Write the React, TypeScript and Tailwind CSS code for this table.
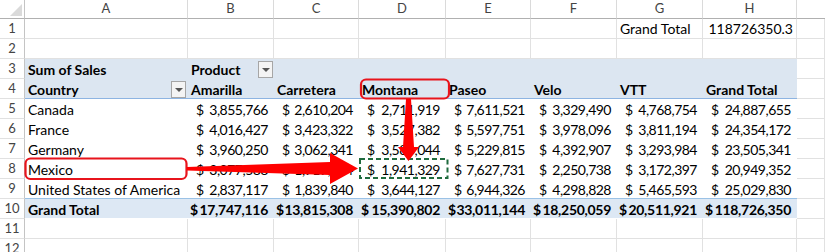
import React from "react";

// column widths: row-number gutter, A..H, then the cut-off column
const GRID =
  "grid grid-cols-[25px_163px_86px_85px_87px_85px_86px_86px_94px_1fr]";

const LETTERS = ["A", "B", "C", "D", "E", "F", "G", "H"];

const PRODUCTS = ["Amarilla", "Carretera", "Montana", "Paseo", "Velo", "VTT", "Grand Total"];

const DATA: [string, string[]][] = [
  ["Canada", ["3,855,766", "2,610,204", "2,711,919", "7,611,521", "3,329,490", "4,768,754", "24,887,655"]],
  ["France", ["4,016,427", "3,423,322", "3,527,382", "5,597,751", "3,978,096", "3,811,194", "24,354,172"]],
  ["Germany", ["3,960,250", "3,062,341", "3,586,044", "5,229,815", "4,392,907", "3,293,984", "23,505,341"]],
  ["Mexico", ["3,077,588", "1,919,444", "1,941,329", "7,627,731", "2,250,738", "3,172,397", "20,949,352"]],
  ["United States of America", ["2,837,117", "1,839,840", "3,644,127", "6,944,326", "4,298,828", "5,465,593", "25,029,830"]],
];

const TOTALS = ["17,747,116", "13,815,308", "15,390,802", "33,011,144", "18,250,059", "20,511,921", "118,726,350"];

function RowNum({ n }: { n: number }) {
  return (
    <div className="h-[20px] flex items-center justify-center border-r border-b border-r-[#c4c4c4] border-b-[#e1e1e1] text-[13px] text-[#444]">
      {n}
    </div>
  );
}

function Blank() {
  return <div className="h-[20px] border-r border-b border-[#e1e1e1]" />;
}

function Drop() {
  return (
    <span className="w-[15px] h-[17px] border border-[#a6a6a6] bg-[#f4f4f4] flex items-center justify-center">
      <span className="w-0 h-0 border-l-[4px] border-r-[4px] border-t-[4px] border-l-transparent border-r-transparent border-t-[#555]" />
    </span>
  );
}

function Money({ v, bold }: { v: string; bold?: boolean }) {
  return (
    <div
      className={`h-[20px] flex items-center justify-between pr-[6px] ${
        bold ? "pl-[2px] font-bold tracking-[-0.3px]" : "pl-[8px] tracking-[-0.5px]"
      }`}
    >
      <span>$</span>
      <span>{v}</span>
    </div>
  );
}

export default function App() {
  return (
    <div
      className="relative w-[825px] h-[252px] overflow-hidden bg-white text-[14px] text-black"
      style={{ fontFamily: "Lato, 'Liberation Sans', sans-serif" }}
    >
      {/* column headers */}
      <div className={GRID}>
        <div className="h-[19px] relative border-r border-b border-r-[#c4c4c4] border-b-[#b0b0b0]">
          <svg className="absolute left-[10px] top-[4px]" width="13" height="13" viewBox="0 0 13 13">
            <polygon points="12,0 12,12 0,12" fill="#dadada" />
          </svg>
        </div>
        {LETTERS.map((l) => (
          <div
            key={l}
            className="h-[19px] flex items-center justify-center border-r border-b border-r-[#dadada] border-b-[#b0b0b0] text-[13px] text-[#444]"
          >
            {l}
          </div>
        ))}
        <div className="h-[19px] border-b border-[#b0b0b0]" />
      </div>

      {/* row 1 */}
      <div className={GRID}>
        <RowNum n={1} />
        {[0, 1, 2, 3, 4, 5].map((i) => (
          <Blank key={i} />
        ))}
        <div className="h-[20px] flex items-center pl-[3px] border-r border-b border-[#e1e1e1]">Grand Total</div>
        <div className="h-[20px] flex items-center justify-end pr-[3px] border-r border-b border-[#e1e1e1]">118726350.3</div>
        <Blank />
      </div>

      {/* row 2 */}
      <div className={GRID}>
        <RowNum n={2} />
        {[0, 1, 2, 3, 4, 5, 6, 7, 8].map((i) => (
          <Blank key={i} />
        ))}
      </div>

      {/* row 3 - pivot header */}
      <div className={GRID}>
        <RowNum n={3} />
        <div className="col-span-8 h-[20px] bg-[#dce6f1] grid grid-cols-[163px_86px_1fr] font-bold">
          <div className="flex items-center pl-[3px]">Sum of Sales</div>
          <div className="flex items-center justify-between pl-[3px] pr-[1px]">
            <span>Product</span>
            <Drop />
          </div>
          <div />
        </div>
        <Blank />
      </div>

      {/* row 4 - column labels */}
      <div className={GRID}>
        <RowNum n={4} />
        <div className="col-span-8 h-[20px] bg-[#dce6f1] border-b border-[#8db4e2] grid grid-cols-[163px_86px_85px_87px_85px_86px_86px_94px] font-bold">
          <div className="flex items-center justify-between pl-[3px] pr-[2px]">
            <span>Country</span>
            <Drop />
          </div>
          {PRODUCTS.map((p) => (
            <div key={p} className="flex items-center pl-[3px] whitespace-nowrap">
              {p}
            </div>
          ))}
        </div>
        <Blank />
      </div>

      {/* rows 5-9 */}
      {DATA.map(([country, vals], r) => (
        <div key={country} className={GRID}>
          <RowNum n={5 + r} />
          <div className="col-span-8 h-[20px] grid grid-cols-[163px_86px_85px_87px_85px_86px_86px_94px]">
            <div className="flex items-center pl-[3px] whitespace-nowrap">{country}</div>
            {vals.map((v, i) => (
              <Money key={i} v={v} />
            ))}
          </div>
          <Blank />
        </div>
      ))}

      {/* row 10 - totals */}
      <div className={GRID}>
        <RowNum n={10} />
        <div className="col-span-8 h-[20px] bg-[#dde8f4] border-t border-[#9bc2e6] -mt-[1px] grid grid-cols-[163px_86px_85px_87px_85px_86px_86px_94px]">
          <div className="flex items-center pl-[3px] font-bold">Grand Total</div>
          {TOTALS.map((v, i) => (
            <Money key={i} v={v} bold />
          ))}
        </div>
        <Blank />
      </div>

      {/* rows 11-12 */}
      {[11, 12].map((n) => (
        <div key={n} className={GRID}>
          <RowNum n={n} />
          {[0, 1, 2, 3, 4, 5, 6, 7, 8].map((i) => (
            <Blank key={i} />
          ))}
        </div>
      ))}

      {/* annotations drawn over the sheet */}
      <svg className="absolute left-0 top-0 pointer-events-none" width="825" height="252" viewBox="0 0 825 252">
        <rect x="361" y="79.5" width="88" height="19" rx="5" fill="none" stroke="#e8141c" strokeWidth="2.2" />
        <rect x="25.5" y="158.5" width="161" height="20.5" rx="5" fill="none" stroke="#e8141c" strokeWidth="2.2" />
        <rect x="360" y="159" width="87.5" height="19" fill="none" stroke="#1f6b3e" strokeWidth="2" strokeDasharray="5 3" />
        <polygon points="187,167 330,162 330,153 358,168.5 330,184 330,175 187,170.5" fill="#ff0000" />
        <polygon points="406,99 411,99 414,147 419,147 408.5,161 398,147 403,147" fill="#ff0000" />
      </svg>
    </div>
  );
}
